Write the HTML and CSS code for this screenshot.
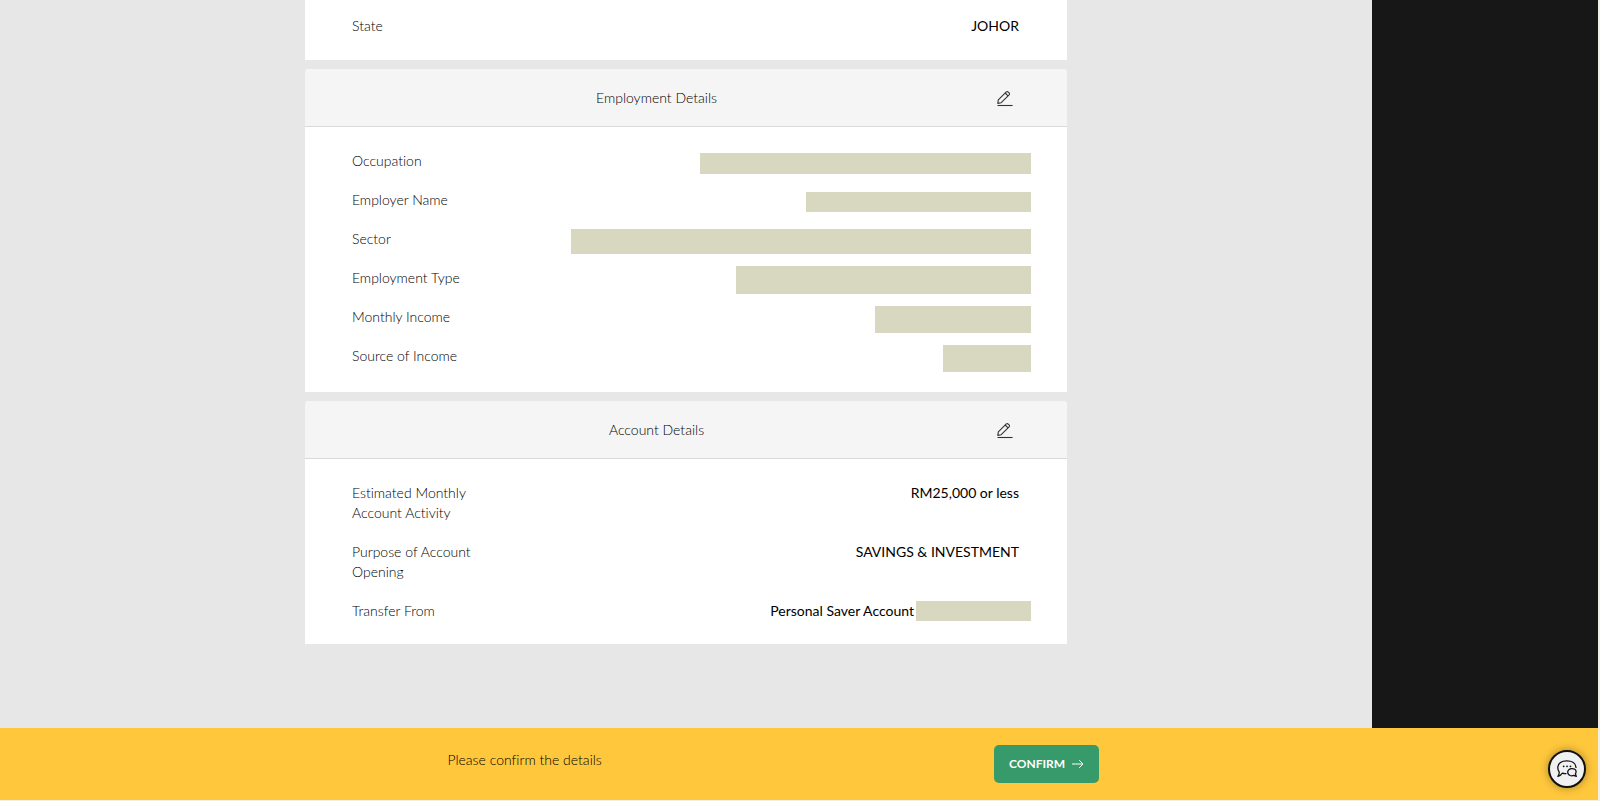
FILE: index.html
```html
<!DOCTYPE html>
<html lang="en">
<head>
<meta charset="utf-8">
<title>Confirm your details</title>
<link rel="stylesheet" href="styles.css">
</head>
<body>
<svg class="sprite" aria-hidden="true">
  <symbol id="pencil" viewBox="0 0 16 16">
    <path d="M.8 12.4 1.3 8.9 9.3.9Q10.3.2 11.3 1.1L12.1 1.9Q12.9 2.8 12.1 3.8L4.2 11.7ZM8.2 2 11 4.8" fill="none" stroke="currentColor" stroke-width="1.1" stroke-linejoin="round"/>
    <path d="M.5 14.5H15.6" stroke="currentColor" stroke-width="1.1"/>
  </symbol>
</svg>
<div class="app">
  <div class="content">
    <main class="summary">
      <section class="card card-continued">
        <dl class="rows rows-first">
          <div class="row"><dt>State</dt><dd>JOHOR</dd></div>
        </dl>
      </section>
      <section class="card">
        <header class="card-head">
          <h2>Employment Details</h2>
          <button class="edit" type="button" aria-label="Edit employment details"><svg><use href="#pencil"/></svg></button>
        </header>
        <dl class="rows">
          <div class="row"><dt>Occupation</dt><dd><span class="mask mask-occupation"></span></dd></div>
          <div class="row"><dt>Employer Name</dt><dd><span class="mask mask-employer"></span></dd></div>
          <div class="row"><dt>Sector</dt><dd><span class="mask mask-sector"></span></dd></div>
          <div class="row"><dt>Employment Type</dt><dd><span class="mask mask-type"></span></dd></div>
          <div class="row"><dt>Monthly Income</dt><dd><span class="mask mask-income"></span></dd></div>
          <div class="row"><dt>Source of Income</dt><dd><span class="mask mask-source"></span></dd></div>
        </dl>
      </section>
      <section class="card">
        <header class="card-head">
          <h2>Account Details</h2>
          <button class="edit" type="button" aria-label="Edit account details"><svg><use href="#pencil"/></svg></button>
        </header>
        <dl class="rows rows-last">
          <div class="row"><dt>Estimated Monthly Account Activity</dt><dd>RM25,000 or less</dd></div>
          <div class="row"><dt>Purpose of Account Opening</dt><dd>SAVINGS &amp; INVESTMENT</dd></div>
          <div class="row"><dt>Transfer From</dt><dd>Personal Saver Account<span class="mask mask-account"></span></dd></div>
        </dl>
      </section>
    </main>
    <aside class="side"></aside>
  </div>
  <footer class="bar">
    <p>Please confirm the details</p>
    <button class="confirm" type="button">CONFIRM
      <svg viewBox="0 0 12 10"><path d="M0 5H11M7.2 1.2 11 5 7.2 8.800" fill="none" stroke="currentColor"/></svg>
    </button>
  </footer>
</div>
<button class="chat" type="button" aria-label="Chat">
  <svg viewBox="0 0 20 18" fill="none" stroke="currentColor" stroke-width="1.3" stroke-linejoin="round" stroke-linecap="round">
    <path d="M9 13.6C7.600 13.900 6.400 13.600 5.200 13.200 4.200 15 2.700 16 .9 16.300 2 15 2.300 13.700 2.200 12 .9 10.400.7 8.800.8 7 1.300 3 5 .8 9.800.8 15 .8 18.800 3.300 19 7.400"/>
    <path d="M18.400 13.800C19.500 12.200 19.300 10.300 17.800 9.300 15.800 8 12.800 8.400 11.400 10.200 10 12.200 10.800 14.600 13 15.500 14.300 16 15.500 15.900 16.700 15.400L19.300 16.400Z"/>
    <path d="M6.600 6.300h.1M10 6.300h.1M13.400 6.300h.1" stroke-width="1.700"/>
  </svg>
</button>
</body>
</html>
```
FILE: styles.css
```css
* { box-sizing: border-box; }
body {
  margin: 0;
  background: #f2efe8;
  font: 14px/20px Lato, "Liberation Sans", sans-serif;
  font-variant-ligatures: none;
  color: #000;
}
.sprite { position: absolute; width: 0; height: 0; }
.app {
  display: flex;
  flex-direction: column;
  min-height: 100vh;
  padding: 0 2px 1px 0;
}
.content { flex: 1; display: flex; background: #e7e7e7; }
.summary {
  flex: 1;
  display: flex;
  flex-direction: column;
  align-items: center;
  gap: 9px;
  padding-bottom: 80px;
}
.side { width: 226px; background: #171717; }
.card { width: 100%; max-width: 762px; background: #fff; border-radius: 4px 4px 0 0; }
.card-continued { border-radius: 0; }
.card-head {
  display: flex;
  align-items: center;
  height: 58px;
  padding: 0 47px;
  background: #f5f5f5;
  border-bottom: 1px solid #d9d9d9;
  border-radius: 4px 4px 0 0;
}
h2 { flex: 1; margin: 0; font-size: 14px; font-weight: 300; text-align: center; }
.edit {
  display: flex;
  justify-content: flex-end;
  width: 59px;
  padding: 3px 7px 0 0;
  border: 0;
  background: none;
  color: #333;
}
.edit svg { width: 16px; height: 16px; }
.rows { display: flex; flex-direction: column; gap: 19px; margin: 0; padding: 24px 36px 26px 47px; }
.rows-first { padding-top: 16px; padding-bottom: 24px; }
.rows-last { padding-bottom: 23px; }
.row { display: flex; justify-content: space-between; }
dt { width: 130px; font-weight: 300; }
dd {
  display: flex;
  align-items: center;
  height: 20px;
  margin: 0;
  padding-right: 12px;
  font-weight: 400;
}
.mask { flex: none; height: 20px; margin: 4px -12px 0 0; background: #d8d8c1; }
.mask-occupation { width: 331px; height: 21px; }
.mask-employer { width: 225px; }
.mask-sector { width: 460px; height: 25px; }
.mask-type { width: 295px; height: 28px; }
.mask-income { width: 156px; height: 27px; }
.mask-source { width: 88px; height: 27px; }
.mask-account { width: 115px; margin-top: 0; margin-left: 2px; }
.bar {
  display: grid;
  grid-template-columns: 47.5% auto;
  justify-content: start;
  padding: 17px 0 17px 28%;
  background: #fec73c;
}
.bar p { margin: 0; padding-top: 5px; font-weight: 300; }
.confirm {
  display: flex;
  align-items: center;
  gap: 7px;
  height: 38px;
  padding: 0 15px;
  border: 0;
  border-radius: 5px;
  background: #379a6b;
  color: #fff;
  font: 700 12px/20px Lato, sans-serif;
}
.confirm svg { width: 12px; height: 10px; }
.chat {
  position: fixed;
  right: 14px;
  bottom: 13px;
  display: flex;
  align-items: center;
  justify-content: center;
  width: 38px;
  height: 38px;
  padding: 0;
  border: 2px solid #111;
  border-radius: 50%;
  background: #f1f1f1;
  color: #111;
  box-shadow: 0 0 8px rgba(0, 0, 0, .35);
}
.chat svg { width: 20px; height: 18px; }
```
